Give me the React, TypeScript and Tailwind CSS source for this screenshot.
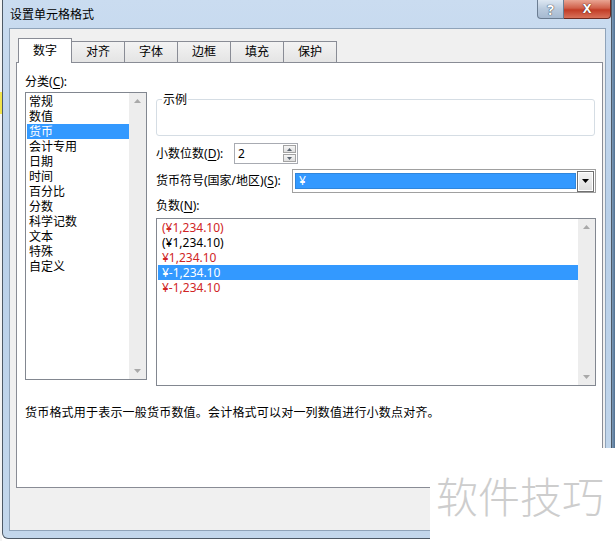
import React from "react";

const categories = ["常规", "数值", "货币", "会计专用", "日期", "时间", "百分比", "分数", "科学记数", "文本", "特殊", "自定义"];

const negatives = [
  { text: "(¥1,234.10)", red: true },
  { text: "(¥1,234.10)", red: false },
  { text: "¥1,234.10", red: true },
  { text: "¥-1,234.10", selected: true },
  { text: "¥-1,234.10", red: true },
];

const tabs = ["对齐", "字体", "边框", "填充", "保护"];

const Tri = ({ up, color, w = 7, h = 4 }: { up?: boolean; color: string; w?: number; h?: number }) => (
  <svg width={w} height={h} viewBox={`0 0 ${w} ${h}`}>
    <path d={up ? `M0 ${h}L${w / 2} 0L${w} ${h}Z` : `M0 0L${w} 0L${w / 2} ${h}Z`} fill={color} />
  </svg>
);

const ScrollTrack = () => (
  <div className="w-[17px] self-stretch bg-[#ededed] flex flex-col justify-between items-center py-[6px]">
    <Tri up color="#a9a9a9" />
    <Tri color="#a9a9a9" />
  </div>
);

const Key = ({ label, k, tail }: { label: string; k: string; tail?: string }) => (
  <span>
    {label}(<span className="underline underline-offset-2">{k}</span>){tail ?? ":"}
  </span>
);

const CategoryList = () => (
  <div className="w-[122px] h-[288px] mt-[3px] border border-[#828790] bg-white flex">
    <div className="flex-1 flex flex-col pt-[1px] pl-[1px]">
      {categories.map((c) => (
        <div
          key={c}
          className={`h-[15px] leading-[15px] pl-[2px] ${c === "货币" ? "bg-[#3399ff] text-white" : "text-black"}`}
        >
          {c}
        </div>
      ))}
    </div>
    <ScrollTrack />
  </div>
);

const Spinner = () => (
  <div className="w-[64px] h-[21px] border border-[#a8abb2] bg-white flex">
    <div className="flex-1 pl-[3px] leading-[19px]">2</div>
    <div className="w-[15px] flex flex-col p-[1px] gap-[1px]">
      <div className="flex-1 border border-[#a3a3a3] bg-[linear-gradient(#f6f6f6,#dedede)] flex items-center justify-center">
        <Tri up color="#5a6470" w={5} h={3} />
      </div>
      <div className="flex-1 border border-[#a3a3a3] bg-[linear-gradient(#f6f6f6,#dedede)] flex items-center justify-center">
        <Tri color="#5a6470" w={5} h={3} />
      </div>
    </div>
  </div>
);

const CurrencySelect = () => (
  <div className="w-[304px] h-[24px] border border-[#a0a0a0] bg-white flex items-center pl-[2px] pr-[1px]">
    <div className="flex-1 h-[16px] bg-[#3399ff] border border-[#2f86dc] text-white leading-[14px] pl-[3px]">¥</div>
    <div className="w-[17px] h-[21px] ml-[1px] border border-[#707070] bg-[linear-gradient(#f4f4f4,#dcdcdc)] flex items-center justify-center shadow-[inset_0_0_0_1px_#ffffff]">
      <Tri color="#000000" w={7} h={4} />
    </div>
  </div>
);

const NegativeList = () => (
  <div className="w-[440px] h-[168px] mt-[5px] border border-[#828790] bg-white flex">
    <div className="flex-1 flex flex-col pt-[1px] pl-[1px]">
      {negatives.map((n, i) => (
        <div
          key={i}
          className={`h-[15px] leading-[15px] pl-[4px] ${
            n.selected ? "bg-[#3399ff] text-white" : n.red ? "text-[#d02525]" : "text-black"
          }`}
        >
          {n.text}
        </div>
      ))}
    </div>
    <ScrollTrack />
  </div>
);

const TitleBar = () => (
  <div className="h-[28px] flex items-start">
    <span className="pl-[7px] pt-[7px] leading-[15px] text-black">设置单元格格式</span>
    <div className="ml-auto flex">
      <div className="w-[27px] h-[19px] rounded-bl-[4px] border border-t-0 border-[#6b7d92] bg-[linear-gradient(#dde7f2,#b9cadd_50%,#a6bad1)] flex items-center justify-center text-white text-[14px] font-bold [text-shadow:0_0_1px_#2c3a4a,0_0_1px_#2c3a4a]">
        ?
      </div>
      <div className="w-[47px] h-[19px] rounded-br-[4px] border border-t-0 border-l-0 border-[#6e2a20] bg-[linear-gradient(#e9a593,#d0604a_45%,#c23c26_55%,#d8725a)] flex items-center justify-center text-white text-[13px] font-bold [text-shadow:0_0_1px_#4a1a12,0_0_1px_#4a1a12]">
        X
      </div>
    </div>
  </div>
);

export default function App() {
  return (
    <div className="w-[615px] h-[541px] relative overflow-hidden flex bg-white font-['Noto_Sans','Noto_Sans_CJK_SC',sans-serif] text-[12px] text-black">
      <div className="w-[2px] flex flex-col">
        <div className="h-[92px] bg-[#f4f4f4]" />
        <div className="h-[22px] bg-[#f3e44a]" />
        <div className="flex-1 bg-[#f4f4f4]" />
      </div>

      <div className="w-[610px] h-[539px] flex flex-col border-x border-b border-[#4d5966] rounded-b-[6px] bg-[linear-gradient(180deg,#cadcf0,#b9d0e9_40%,#c3d7ec)]">
        <TitleBar />

        <div className="flex-1 ml-[6px] mr-[5px] mb-[7px] border border-[#8fa3b9] bg-[#f0f0f0] flex flex-col pl-[6px] pr-[2px] pt-[9px]">
          <div className="flex items-end h-[24px] pl-[2px]">
            <div className="w-[54px] h-[25px] -mb-[1px] bg-white border border-b-0 border-[#898c95] flex items-center justify-center relative z-10">
              数字
            </div>
            {tabs.map((t) => (
              <div
                key={t}
                className="w-[54px] h-[21px] -ml-[1px] border border-b-0 border-[#898c95] bg-[linear-gradient(#f3f3f3,#e4e4e4)] flex items-center justify-center"
              >
                {t}
              </div>
            ))}
          </div>

          <div className="h-[426px] border border-[#898c95] bg-white flex flex-col pl-[8px] pt-[11px]">
            <div className="flex gap-[9px] items-start">
              <div className="flex flex-col">
                <div className="leading-[15px]">
                  <Key label="分类" k="C" />
                </div>
                <CategoryList />
              </div>

              <div className="flex flex-col w-[440px]">
                <div className="relative mt-[25px] h-[37px] w-[439px] border border-[#d5dde4] rounded-[3px]">
                  <span className="absolute left-[5px] -top-[8px] px-[1px] bg-white leading-[15px]">示例</span>
                </div>

                <div className="flex items-center mt-[7px]">
                  <div className="w-[78px]">
                    <Key label="小数位数" k="D" />
                  </div>
                  <Spinner />
                </div>

                <div className="flex items-center mt-[5px]">
                  <div className="w-[136px]">
                    <Key label="货币符号(国家/地区)" k="S" />
                  </div>
                  <CurrencySelect />
                </div>

                <div className="mt-[5px] leading-[15px]">
                  <Key label="负数" k="N" />
                </div>
                <NegativeList />
              </div>
            </div>

            <div className="mt-[19px] leading-[15px] tracking-[0.2px]">
              货币格式用于表示一般货币数值。会计格式可以对一列数值进行小数点对齐。
            </div>
          </div>
        </div>
      </div>

      <div className="flex-1 bg-[linear-gradient(90deg,#7d9bb8,#4f6f91)]" />

      <div className="absolute right-0 bottom-0 w-[185px] h-[93px] bg-white flex items-center pl-[6px]">
        <span className="text-[42px] leading-none font-light text-[#cdcdcd] font-['Noto_Sans_CJK_SC',sans-serif]">
          软件技巧
        </span>
      </div>
    </div>
  );
}
